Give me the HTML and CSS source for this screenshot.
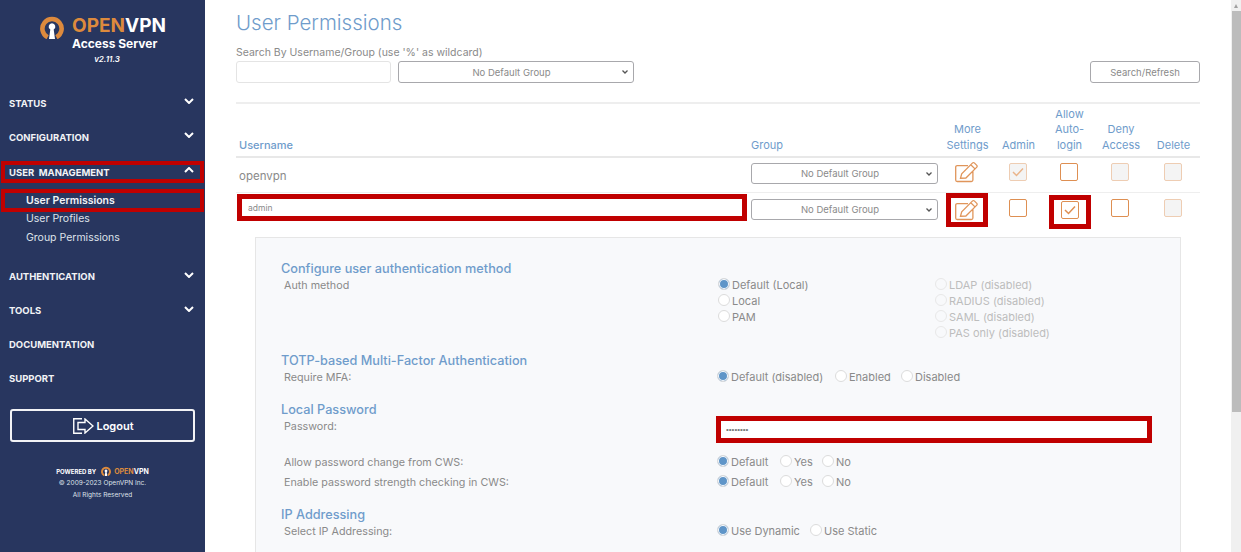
FILE: index.html
```html
<!DOCTYPE html>
<html lang="en">
<head>
    <meta charset="UTF-8">
    <meta name="viewport" content="width=device-width, initial-scale=1.0">
    <title>User Permissions</title>
    <link rel="stylesheet" href="styles.css">
</head>
<body>
    <nav class="sidebar">
        <div class="logo">
            <svg class="logo-icon" viewBox="0 0 24 24" width="24" height="24">
                <path d="M7.6 22.2A9.6 9.6 0 1 1 16.4 22.2" fill="none" stroke="#dd8a3d" stroke-width="4.6"/>
                <path d="M12 8.2a3.4 3.4 0 0 1 1.7 6.3L15 24H9l1.3-9.5A3.4 3.4 0 0 1 12 8.2Z" fill="#fff"/>
            </svg>
            <div>
                <div class="logo-name"><span class="orange">OPEN</span>VPN</div>
                <div class="logo-sub">Access Server</div>
            </div>
        </div>
        <div class="version">v2.11.3</div>

        <div class="nav-item">STATUS <svg class="chev" viewBox="0 0 10 6" width="10" height="6"><path d="M1 1l4 4 4-4"/></svg></div>
        <div class="nav-item">CONFIGURATION <svg class="chev" viewBox="0 0 10 6" width="10" height="6"><path d="M1 1l4 4 4-4"/></svg></div>
        <div class="nav-item nav-marked">USER&nbsp; MANAGEMENT <svg class="chev" viewBox="0 0 10 6" width="10" height="6"><path d="M1 5l4-4 4 4"/></svg></div>
        <div class="sub-list">
            <div class="sub-item sub-marked">User Permissions</div>
            <div class="sub-item">User Profiles</div>
            <div class="sub-item sub-last">Group Permissions</div>
        </div>
        <div class="nav-item">AUTHENTICATION <svg class="chev" viewBox="0 0 10 6" width="10" height="6"><path d="M1 1l4 4 4-4"/></svg></div>
        <div class="nav-item">TOOLS <svg class="chev" viewBox="0 0 10 6" width="10" height="6"><path d="M1 1l4 4 4-4"/></svg></div>
        <div class="nav-item">DOCUMENTATION</div>
        <div class="nav-item">SUPPORT</div>

        <button class="logout">
            <svg viewBox="0 0 21 16" width="21" height="16" fill="none" stroke="#fff" stroke-width="1.4">
                <path d="M9 .75H.75V15.25H9"/>
                <path d="M5 4.5H12V1L20 8 12 15V11.5H5Z"/>
            </svg>
            Logout
        </button>

        <div class="powered">
            POWERED BY
            <svg viewBox="0 0 24 24" width="10" height="10">
                <path d="M7.6 22.2A9.6 9.6 0 1 1 16.4 22.2" fill="none" stroke="#dd8a3d" stroke-width="4.6"/>
                <path d="M12 8.2a3.4 3.4 0 0 1 1.7 6.3L15 24H9l1.3-9.5A3.4 3.4 0 0 1 12 8.2Z" fill="#fff"/>
            </svg>
            <span class="powered-name"><span class="orange">OPEN</span>VPN</span>
        </div>
        <div class="copy">© 2009-2023 OpenVPN Inc.</div>
        <div class="copy">All Rights Reserved</div>
    </nav>

    <main class="content">
        <h1>User Permissions</h1>
        <div class="search-label">Search By Username/Group (use '%' as wildcard)</div>
        <div class="search-row">
            <input class="search-input" type="text">
            <select class="group-select wide"><option>No Default Group</option></select>
            <button class="search-btn">Search/Refresh</button>
        </div>

        <table class="users">
            <colgroup>
                <col class="col-user"><col class="col-group"><col class="col-s"><col class="col-s"><col class="col-s"><col class="col-m"><col class="col-l">
            </colgroup>
            <thead>
                <tr>
                    <th class="left first">Username</th>
                    <th class="left second">Group</th>
                    <th>More<br>Settings</th>
                    <th>Admin</th>
                    <th>Allow<br>Auto-<br>login</th>
                    <th>Deny<br>Access</th>
                    <th>Delete</th>
                </tr>
            </thead>
            <tbody>
                <tr class="row-one">
                    <td class="username">openvpn</td>
                    <td class="group-cell"><select class="group-select"><option>No Default Group</option></select></td>
                    <td>
                        <svg class="edit" viewBox="0 0 24 22" width="24" height="22"><path d="M13 4.6H2.2A1.5 1.5 0 0 0 .7 6.1V19a1.5 1.5 0 0 0 1.5 1.5h14.2a1.5 1.5 0 0 0 1.5-1.5V10M5.5 17.2l1.2-4.4L17.6 1.9a1.2 1.2 0 0 1 1.7 0l2.5 2.5a1.2 1.2 0 0 1 0 1.7L10.900 17ZM15.800 3.700l4.200 4.200"/></svg>
                    </td>
                    <td><span class="check disabled checked"><svg viewBox="0 0 12 10" width="12" height="10"><path d="M1 5l3.500 3.500L11 1.500"/></svg></span></td>
                    <td><span class="check"></span></td>
                    <td><span class="check disabled"></span></td>
                    <td><span class="check disabled"></span></td>
                </tr>
                <tr class="row-two">
                    <td class="username"><input class="user-input" type="text" value="admin"></td>
                    <td class="group-cell"><select class="group-select"><option>No Default Group</option></select></td>
                    <td><span class="marked-cell marked-edit">
                        <svg class="edit" viewBox="0 0 24 22" width="24" height="22"><path d="M13 4.6H2.2A1.5 1.5 0 0 0 .7 6.1V19a1.5 1.5 0 0 0 1.5 1.5h14.2a1.5 1.5 0 0 0 1.5-1.5V10M5.5 17.2l1.2-4.4L17.6 1.9a1.2 1.2 0 0 1 1.7 0l2.5 2.5a1.2 1.2 0 0 1 0 1.7L10.900 17ZM15.800 3.700l4.200 4.200"/></svg>
                    </span></td>
                    <td><span class="check"></span></td>
                    <td><span class="marked-cell"><span class="check checked"><svg viewBox="0 0 12 10" width="12" height="10"><path d="M1 5l3.500 3.500L11 1.500"/></svg></span></span></td>
                    <td><span class="check"></span></td>
                    <td><span class="check disabled"></span></td>
                </tr>
            </tbody>
        </table>

        <section class="panel">
            <h2>Configure user authentication method</h2>
            <div class="form-row">
                <div class="field-label">Auth method</div>
                <div class="auth-grid">
                    <div class="auth-col">
                        <label class="opt"><input type="radio" name="auth" checked>Default (Local)</label>
                        <label class="opt"><input type="radio" name="auth">Local</label>
                        <label class="opt"><input type="radio" name="auth">PAM</label>
                    </div>
                    <div class="auth-col">
                        <label class="opt off"><input type="radio" disabled>LDAP (disabled)</label>
                        <label class="opt off"><input type="radio" disabled>RADIUS (disabled)</label>
                        <label class="opt off"><input type="radio" disabled>SAML (disabled)</label>
                        <label class="opt off"><input type="radio" disabled>PAS only (disabled)</label>
                    </div>
                </div>
            </div>

            <h2 class="totp">TOTP-based Multi-Factor Authentication</h2>
            <div class="form-row">
                <div class="field-label">Require MFA:</div>
                <div class="opts opts-mfa">
                    <label class="opt"><input type="radio" name="mfa" checked>Default (disabled)</label>
                    <label class="opt"><input type="radio" name="mfa">Enabled</label>
                    <label class="opt"><input type="radio" name="mfa">Disabled</label>
                </div>
            </div>

            <h2 class="local">Local Password</h2>
            <div class="form-row">
                <div class="field-label">Password:</div>
                <input class="pass-input" type="password" value="password">
            </div>
            <div class="form-row allow-row">
                <div class="field-label">Allow password change from CWS:</div>
                <div class="opts opts-yes">
                    <label class="opt"><input type="radio" name="cws" checked>Default</label>
                    <label class="opt"><input type="radio" name="cws">Yes</label>
                    <label class="opt"><input type="radio" name="cws">No</label>
                </div>
            </div>
            <div class="form-row enable-row">
                <div class="field-label">Enable password strength checking in CWS:</div>
                <div class="opts opts-yes">
                    <label class="opt"><input type="radio" name="strength" checked>Default</label>
                    <label class="opt"><input type="radio" name="strength">Yes</label>
                    <label class="opt"><input type="radio" name="strength">No</label>
                </div>
            </div>

            <h2 class="ip">IP Addressing</h2>
            <div class="form-row">
                <div class="field-label">Select IP Addressing:</div>
                <div class="opts opts-ip">
                    <label class="opt"><input type="radio" name="ip" checked>Use Dynamic</label>
                    <label class="opt"><input type="radio" name="ip">Use Static</label>
                </div>
            </div>
        </section>
    </main>

    <div class="scrollbar">
        <div class="scroll-arrow"></div>
        <div class="scroll-thumb"></div>
    </div>
</body>
</html>
```

FILE: styles.css
```css
* {
    box-sizing: border-box;
}
body {
    margin: 0;
    display: flex;
    height: 100vh;
    overflow: hidden;
    background: #fff;
    font-family: 'Inter', 'Liberation Sans', sans-serif;
    color: #8a8a8a;
}

/* sidebar */
.sidebar {
    width: 205px;
    flex-shrink: 0;
    background: #28365f;
    color: #fff;
}
.logo {
    display: flex;
    gap: 8px;
    padding: 15px 0 0 40px;
}
.logo-icon {
    flex-shrink: 0;
}
.logo-name {
    font-size: 19px;
    font-weight: 700;
    line-height: 21px;
}
.orange {
    color: #dd8a3d;
}
.logo-sub {
    font-size: 12px;
    font-weight: 700;
    line-height: 14px;
    margin-top: 1px;
}
.version {
    padding-left: 9px;
    margin-top: 3px;
    height: 32px;
    text-align: center;
    font-size: 8px;
    font-style: italic;
    font-weight: 600;
    line-height: 10px;
}
.nav-item {
    height: 34px;
    padding: 0 11px 0 9px;
    display: flex;
    align-items: center;
    justify-content: space-between;
    font-size: 9.5px;
    font-weight: 700;
    color: #f2f3f6;
}
.chev {
    margin-top: -4px;
    fill: none;
    stroke: #fff;
    stroke-width: 2;
}
.nav-marked {
    height: 22px;
    margin: 7px 1px 5px;
    padding: 0 6px 0 4px;
    border: 4px solid #c00000;
}
.sub-list {
    padding: 1px 0 15.5px;
}
.sub-item {
    height: 12px;
    line-height: 12px;
    padding-left: 26px;
    font-size: 10.5px;
    color: #dfe2ea;
}
.sub-marked {
    height: 23px;
    line-height: 15px;
    margin: 0 1px 1px;
    padding-left: 21px;
    border: 4px solid #c00000;
    font-weight: 600;
    color: #f2f3f6;
}
.sub-last {
    margin-top: 7px;
}
.logout {
    display: flex;
    align-items: center;
    justify-content: center;
    gap: 2px;
    width: 185px;
    height: 33px;
    margin: 13.5px 0 0 10px;
    padding: 0 0 0 2px;
    background: transparent;
    border: 2px solid #f2f3f6;
    border-radius: 3px;
    color: #fff;
    font-family: inherit;
    font-size: 11px;
    font-weight: 600;
}
.powered {
    display: flex;
    align-items: center;
    justify-content: center;
    gap: 5px;
    margin-top: 24px;
    height: 10px;
    font-size: 6px;
    font-weight: 700;
}
.powered-name {
    font-size: 7px;
    font-weight: 700;
    margin-left: -2px;
}
.copy {
    margin-top: 2px;
    height: 10px;
    line-height: 10px;
    text-align: center;
    font-size: 6.5px;
    color: #dfe2ea;
}

/* main area */
.content {
    flex: 1;
    min-width: 0;
    display: flex;
    flex-direction: column;
    padding: 0 31px;
}
h1 {
    margin: 10px 0 0;
    font-size: 20.5px;
    font-weight: 300;
    line-height: 26px;
    color: #6f9ccb;
}
.search-label {
    margin-top: 10px;
    font-size: 10.5px;
    line-height: 14px;
}
.search-row {
    display: flex;
    gap: 7px;
    margin-top: 1px;
    padding-bottom: 19px;
    border-bottom: 2px solid #eee;
}
.search-input {
    width: 155px;
    height: 22px;
    border: 1px solid #e4e4e4;
    border-radius: 3px;
}
.group-select {
    display: block;
    appearance: none;
    width: 187px;
    height: 21px;
    padding: 0 9px 0 0;
    border: 1.5px solid #a8a8ac;
    border-radius: 3px;
    background: #fff url("data:image/svg+xml,%3Csvg xmlns='http://www.w3.org/2000/svg' width='6' height='4'%3E%3Cpath d='M.5.5l2.500 2.500L5.500.5' fill='none' stroke='%23555' stroke-width='1.300'/%3E%3C/svg%3E") no-repeat right 5px center;
    color: #8a8a8a;
    font-family: inherit;
    font-size: 9.5px;
    text-align-last: center;
}
.group-select.wide {
    width: 236px;
    height: 22px;
}
.search-btn {
    width: 110px;
    height: 22px;
    margin-left: auto;
    border: 1.5px solid #a8a8ac;
    border-radius: 3px;
    background: #fff;
    color: #8a8a8a;
    font-family: inherit;
    font-size: 9.5px;
}

/* user table */
.users {
    width: 964px;
    table-layout: fixed;
    border-collapse: collapse;
}
.col-user {
    width: 511px;
}
.col-group {
    width: 195px;
}
.col-s {
    width: 51px;
}
.col-m {
    width: 52px;
}
.col-l {
    width: 53px;
}
.users th {
    height: 53px;
    padding: 0 0 3px;
    vertical-align: bottom;
    border-bottom: 2px solid #e8e8e8;
    color: #6f9ccb;
    font-size: 11px;
    font-weight: 400;
    line-height: 15.5px;
}
.users th.left {
    text-align: left;
    padding-left: 3px;
}
.users th.first {
    font-weight: 500;
}
.users th.second {
    padding-left: 4px;
}
.users td {
    padding: 0 2px 0 0;
    vertical-align: top;
    text-align: center;
}
.row-one td {
    height: 35px;
    padding-top: 5px;
    border-bottom: 1px solid #eee;
}
.row-two td {
    height: 35px;
    padding-top: 6px;
}
.users td.username {
    padding: 2px 0 0 3px;
    text-align: left;
    font-size: 11.5px;
    line-height: 32px;
}
.row-two td.username {
    padding: 1px 0 0 1px;
    line-height: 0;
}
.users td.group-cell {
    padding-left: 4px;
    padding-right: 0;
}
.user-input {
    display: block;
    width: 510px;
    height: 27px;
    padding: 0 6px;
    border: 5px solid #c00000;
    color: #8a8a8a;
    font-family: inherit;
    font-size: 8.5px;
}
.edit {
    display: inline-block;
    margin-top: -2px;
    fill: none;
    stroke: #e0955a;
    stroke-width: 1.300;
}
.check {
    display: inline-flex;
    align-items: center;
    justify-content: center;
    width: 18px;
    height: 18px;
    background: #fff;
    border: 1.5px solid #de8f52;
    border-radius: 2px;
    vertical-align: top;
}
.check svg {
    fill: none;
    stroke: #de8f52;
    stroke-width: 1.500;
}
.check.disabled {
    background: #f4f4f4;
    border-color: #eecdb3;
}
.check.disabled svg {
    stroke: #eab48a;
}
.marked-cell {
    display: inline-flex;
    justify-content: center;
    align-items: flex-start;
    width: 42px;
    height: 34px;
    margin: -6px -2px 0 0;
    padding-top: 1px;
    border: 5px solid #c00000;
}
.marked-edit {
    margin-left: -2px;
}
.marked-cell .edit {
    margin-top: 0;
}

/* settings panel */
.panel {
    flex: 1;
    margin: 8px 19px 0;
    padding: 23px 25px 0;
    background: #f8f9fb;
    border: 1px solid #e6e6e6;
    border-bottom: 0;
}
h2 {
    margin: 0;
    font-size: 12.7px;
    font-weight: 500;
    line-height: 16px;
    color: #6f9ccb;
}
.form-row {
    display: grid;
    grid-template-columns: 435px 1fr;
    margin-top: 1px;
}
.field-label {
    padding-left: 3px;
    font-size: 10.75px;
    line-height: 16px;
}
.auth-grid {
    display: grid;
    grid-template-columns: 217px 1fr;
    padding-left: 2px;
}
.opt {
    display: flex;
    align-items: flex-start;
    gap: 2px;
    height: 16px;
    font-size: 11px;
    line-height: 15px;
}
.opt.off {
    color: #bdbdbd;
}
.opt input {
    appearance: none;
    width: 12px;
    height: 12px;
    margin: 0;
    background: #fff;
    border: 1px solid #dcdcdc;
    border-radius: 50%;
}
.opt input:checked {
    background: #5f95c8;
    box-shadow: inset 0 0 0 1px #fff;
}
.opt input:disabled {
    background: #f8f9fb;
    border-color: #e8e8e8;
}
.opts {
    display: grid;
    padding-left: 1px;
}
.opts-mfa {
    grid-template-columns: 118px 66px auto;
}
.opts-yes {
    grid-template-columns: 63px 42px auto;
}
.opts-ip {
    grid-template-columns: 93px auto;
}
.totp {
    margin-top: 11px;
}
.local {
    margin-top: 16px;
}
.pass-input {
    width: 436px;
    height: 27px;
    margin-top: -3px;
    padding: 0 5px;
    border: 5px solid #c00000;
    color: #777;
    font-family: 'Liberation Sans', sans-serif;
    font-size: 8px;
}
.allow-row {
    margin-top: 12px;
}
.enable-row {
    margin-top: 4px;
}
.ip {
    margin-top: 16px;
}

.scrollbar {
    width: 10px;
    flex-shrink: 0;
    background: #f0f0f0;
    padding-left: 1px;
}
.scroll-arrow {
    width: 0;
    height: 0;
    margin: 4px 0 3px 2px;
    border: 2.5px solid transparent;
    border-top: 0;
    border-bottom: 4px solid #a0a0a0;
}
.scroll-thumb {
    height: 401px;
    background: #bcbcbc;
}
```
